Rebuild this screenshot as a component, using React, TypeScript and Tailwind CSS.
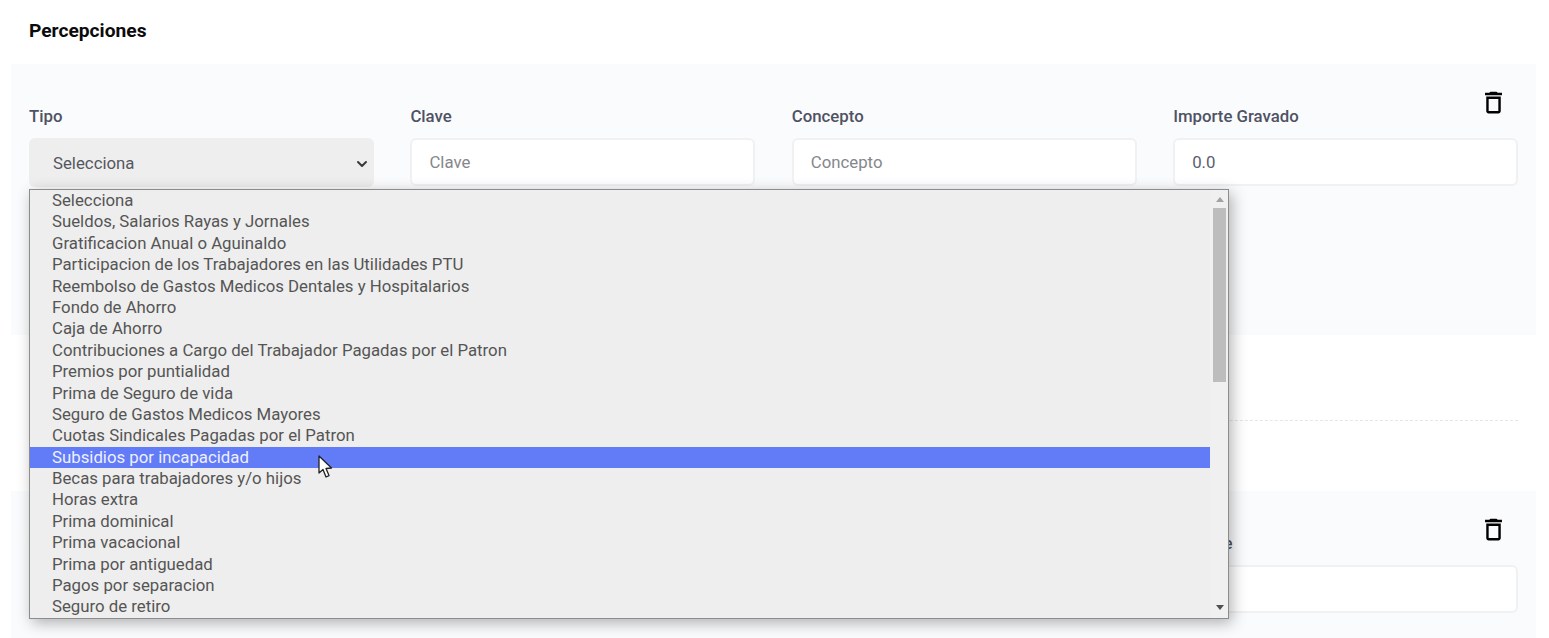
import React from 'react';
import { MdDeleteOutline } from 'react-icons/md';
import { ChevronDown } from 'lucide-react';

const options = [
  'Selecciona',
  'Sueldos, Salarios Rayas y Jornales',
  'Gratificacion Anual o Aguinaldo',
  'Participacion de los Trabajadores en las Utilidades PTU',
  'Reembolso de Gastos Medicos Dentales y Hospitalarios',
  'Fondo de Ahorro',
  'Caja de Ahorro',
  'Contribuciones a Cargo del Trabajador Pagadas por el Patron',
  'Premios por puntialidad',
  'Prima de Seguro de vida',
  'Seguro de Gastos Medicos Mayores',
  'Cuotas Sindicales Pagadas por el Patron',
  'Subsidios por incapacidad',
  'Becas para trabajadores y/o hijos',
  'Horas extra',
  'Prima dominical',
  'Prima vacacional',
  'Prima por antiguedad',
  'Pagos por separacion',
  'Seguro de retiro',
];

const Field: React.FC<{ label: string; placeholder?: string; value?: string }> = ({ label, placeholder, value }) => (
  <div>
    <label className="block text-[16.8px] leading-[22px] font-medium text-[#4f5263] mb-[11px]">{label}</label>
    <div className="h-[48px] bg-white border-2 border-[#f0f1f2] rounded-md pl-[17px] pt-[1px] flex items-center text-[16.8px]">
      {value ? <span className="text-[#5b5e70]">{value}</span> : <span className="text-[#85878c]">{placeholder}</span>}
    </div>
  </div>
);

const PerceptionCard: React.FC<{ className: string; iconClass: string; lastLabel: string }> = ({ className, iconClass, lastLabel }) => (
  <div className={`relative bg-[#fafbfd] px-[18px] ${className}`}>
    <button className={`absolute right-[28px] text-black ${iconClass}`}>
      <MdDeleteOutline className="w-[29px] h-[29px]" />
    </button>
    <div className="grid grid-cols-4 gap-x-[36.5px]">
      <div>
        <label className="block text-[16.8px] leading-[22px] font-medium text-[#4f5263] mb-[11px]">Tipo</label>
        <div className="h-[49px] bg-[#eeeeee] rounded-md pl-[24px] pr-[4px] pt-[2px] flex items-center justify-between text-[16.8px] text-[#55575f]">
          <span>Selecciona</span>
          <ChevronDown className="w-[16px] h-[16px] text-[#3a3a3a]" strokeWidth={3} />
        </div>
      </div>
      <Field label="Clave" placeholder="Clave" />
      <Field label="Concepto" placeholder="Concepto" />
      <Field label={lastLabel} value="0.0" />
    </div>
  </div>
);

export default function App() {
  return (
    <div className="relative h-[638px] overflow-hidden bg-white font-['Roboto',sans-serif] pl-[11px] pr-[13px]">
      <h2 className="pl-[18px] pt-[20px] h-[64px] text-[19.2px] leading-[21px] font-bold text-[#0b0b0b]">Percepciones</h2>

      <PerceptionCard className="h-[271px] pt-[41px]" iconClass="top-[24px]" lastLabel="Importe Gravado" />

      <div className="mx-[18px] mt-[85px] border-t border-dashed border-[#e6e6e6]" />

      <PerceptionCard className="mt-[70px] h-[147px] pt-[41px]" iconClass="top-[24px]" lastLabel="Importe" />

      {/* opened native select list */}
      <div className="absolute left-[29px] top-[189px] w-[1200px] h-[430px] bg-[#eeeeee] border border-[#8c8c8c] shadow-[3px_4px_14px_rgba(0,0,0,0.3)] flex overflow-hidden">
        <ul className="flex-1 min-w-0">
          {options.map((opt, i) => (
            <li
              key={opt}
              className={`h-[21.4px] leading-[21.4px] pl-[22px] text-[16.8px] whitespace-nowrap ${
                i === 12 ? 'bg-[#627bf6] text-[#eef0ff]' : 'text-[#555555]'
              }`}
            >
              {opt}
            </li>
          ))}
        </ul>
        <div className="w-[18px] bg-[#f0f0f0] flex flex-col items-center">
          <svg viewBox="0 0 8 5" className="w-[8px] h-[5px] mt-[7px] mb-[6px] ml-[1px] shrink-0">
            <polygon points="4,0 8,5 0,5" fill="#a3a3a3" />
          </svg>
          <div className="w-[13px] h-[174px] bg-[#bdbdbd] ml-[1px]" />
          <svg viewBox="0 0 8 5" className="w-[8px] h-[5px] mt-auto mb-[8px] ml-[1px] shrink-0">
            <polygon points="0,0 8,0 4,5" fill="#505050" />
          </svg>
        </div>
      </div>

      {/* mouse pointer */}
      <svg viewBox="0 0 15 24" className="absolute left-[318px] top-[455px] w-[15px] h-[24px]">
        <path d="M1 1 L1 18 L5 14.5 L8 22 L11 20.6 L8 13.5 L13.5 13 Z" fill="#ffffff" stroke="#222222" strokeWidth="1.3" strokeLinejoin="round" />
      </svg>
    </div>
  );
}
